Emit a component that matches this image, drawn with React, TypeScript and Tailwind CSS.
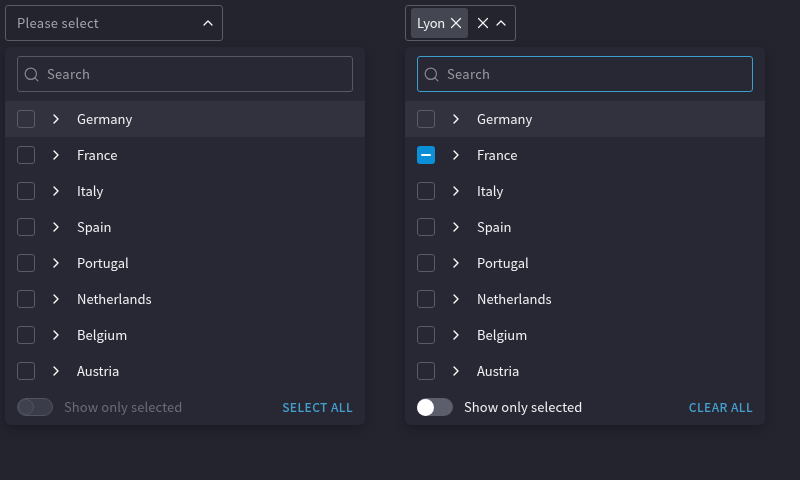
import { ChevronRight, ChevronUp, Search, X } from "lucide-react";

const countries = [
  "Germany",
  "France",
  "Italy",
  "Spain",
  "Portugal",
  "Netherlands",
  "Belgium",
  "Austria",
];

type PanelProps = {
  focused?: boolean;
  partial?: string;
  active?: boolean;
  action: string;
};

const Panel = ({ focused, partial, active, action }: PanelProps) => {
  return (
    <div className="mt-[6px] flex h-[378px] w-[360px] flex-col rounded-md bg-[#272833] shadow-[0_4px_12px_rgba(0,0,0,0.25)]">
      <div className="flex h-[54px] shrink-0 items-start px-3 pt-[9px]">
        <div
          className={`flex h-[36px] w-full items-center gap-[7px] rounded-[3px] border pl-[5px] ${
            focused ? "border-[#3d9fd0]" : "border-[#565863]"
          }`}
        >
          <Search size={17} strokeWidth={1.7} className="text-[#85868f]" />
          <span className="text-[13px] tracking-[0.3px] text-[#9a9ba3]">Search</span>
        </div>
      </div>
      <div className="flex flex-col">
        {countries.map((name, i) => (
          <div
            key={name}
            className={`flex h-[36px] items-center px-3 ${i === 0 ? "bg-[#31323e]" : ""}`}
          >
            {partial === name ? (
              <div className="flex size-[18px] items-center justify-center rounded-[3px] bg-[#0b8fd6]">
                <div className="h-[2px] w-[10px] rounded-[1px] bg-white" />
              </div>
            ) : (
              <div className="size-[18px] rounded-[3px] border border-[#5a5b66]" />
            )}
            <ChevronRight size={16} strokeWidth={2} className="ml-[13px] text-white" />
            <span className="ml-[13px] text-[13px] text-[#f2f2f4]">{name}</span>
          </div>
        ))}
      </div>
      <div className="flex h-[36px] items-center px-3">
        {active ? (
          <div className="flex h-[18px] w-[36px] items-center rounded-full bg-[#5c5e6c]">
            <div className="size-[17px] rounded-full bg-white" />
          </div>
        ) : (
          <div className="flex h-[18px] w-[36px] items-center rounded-full border border-[#50525e] bg-[#3a3c49]">
            <div className="size-[16px] rounded-full border border-[#50525e] bg-[#3f414e]" />
          </div>
        )}
        <span
          className={`ml-[11px] text-[13px] tracking-[0.1px] ${
            active ? "text-[#f2f2f4]" : "text-[#6b6c77]"
          }`}
        >
          Show only selected
        </span>
        <button className="ml-auto text-[12px] font-medium tracking-[0.4px] text-[#44a0cf]">
          {action}
        </button>
      </div>
    </div>
  );
};

const App = () => {
  return (
    <div className="flex h-[480px] w-[800px] gap-[40px] overflow-hidden bg-[#23242e] p-[5px] font-['Noto_Sans_CJK_JP',sans-serif]">
      <div className="flex flex-col items-start will-change-transform">
        <div className="flex h-[36px] w-[218px] items-center justify-between rounded-[3px] border border-[#5a5b66] pl-[11px] pr-[6px]">
          <span className="text-[13px] tracking-[0.3px] text-[#a3a4ab]">Please select</span>
          <ChevronUp size={16} strokeWidth={1.8} className="text-white" />
        </div>
        <Panel action="SELECT ALL" />
      </div>
      <div className="flex flex-col items-start will-change-transform">
        <div className="flex h-[36px] w-[111px] items-center rounded-[3px] border border-[#5a5b66] pl-[5px]">
          <div className="flex h-[30px] w-[57px] items-center justify-between rounded-[3px] bg-[#444652] pl-[6px] pr-[3px]">
            <span className="text-[13px] tracking-[-0.3px] text-[#f2f2f4]">Lyon</span>
            <X size={18} strokeWidth={1.6} className="text-[#f2f2f4]" />
          </div>
          <X size={18} strokeWidth={1.6} className="ml-[6px] text-[#f2f2f4]" />
          <ChevronUp size={16} strokeWidth={1.8} className="ml-px text-white" />
        </div>
        <Panel focused partial="France" active action="CLEAR ALL" />
      </div>
    </div>
  );
};

export default App;
